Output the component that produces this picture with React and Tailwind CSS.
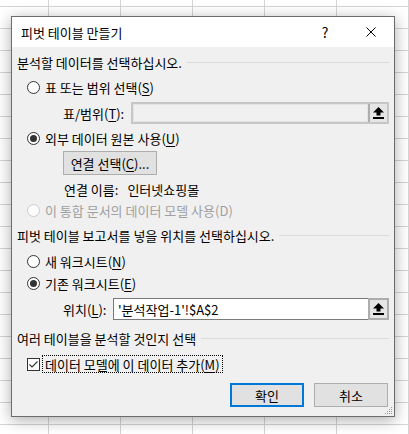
import React from "react";

const font = "font-['Noto_Sans_CJK_KR',sans-serif]";

function Radio({ checked, disabled }) {
  return (
    <span
      className={
        disabled
          ? "w-[13px] h-[13px] rounded-full border border-[#cccccc] bg-[#fcfcfc] flex items-center justify-center shrink-0"
          : "w-[13px] h-[13px] rounded-full border border-[#333333] bg-white flex items-center justify-center shrink-0"
      }
    >
      {checked && <span className="w-[7px] h-[7px] rounded-full bg-[#333333]" />}
    </span>
  );
}

function Section({ children }) {
  return (
    <div className="h-[18px] flex items-center">
      <span className="whitespace-nowrap leading-none">{children}</span>
      <span className="flex-1 h-px bg-[#dcdcdc] ml-[5px]" />
    </div>
  );
}

function UpIcon() {
  return (
    <svg width="11" height="12" viewBox="0 0 11 12">
      <polygon points="5.5,0 11,5.5 7.5,5.5 7.5,8.5 3.5,8.5 3.5,5.5 0,5.5" fill="#000" />
      <rect x="0" y="10" width="11" height="2" fill="#000" />
    </svg>
  );
}

function RefButton() {
  return (
    <span className="w-[21px] h-full border-2 border-[#adadad] bg-[#e5e5e5] flex items-center justify-center shrink-0">
      <UpIcon />
    </span>
  );
}

export default function App() {
  return (
    <div
      className={`w-[409px] h-[434px] overflow-hidden bg-white bg-[linear-gradient(to_right,#d4d4d4_1px,transparent_1px),linear-gradient(to_bottom,#d4d4d4_1px,transparent_1px)] bg-[size:72px_22px] bg-[position:48px_6px] pt-[16px] pl-[11px] ${font} text-[13px] text-black`}
    >
      <div className="relative w-[384px] h-[401px] border border-[#6b6b6b] bg-[#f0f0f0] shadow-[0_3px_14px_rgba(0,0,0,0.33)] flex flex-col">
        {/* Title bar */}
        <div className="h-[30px] bg-white flex items-center shrink-0">
          <span className="pl-[9px] flex-1 leading-none">피벗 테이블 만들기</span>
          <span className="w-[46px] h-full flex items-center justify-center text-[14px] leading-none">?</span>
          <span className="w-[46px] h-full flex items-center justify-center">
            <svg width="10" height="10" viewBox="0 0 10 10">
              <path d="M0.5 0.5 L9.5 9.5 M9.5 0.5 L0.5 9.5" stroke="#000" strokeWidth="1" />
            </svg>
          </span>
        </div>

        {/* Content */}
        <div className="flex flex-col px-[5px] pt-[6px]">
          <Section>분석할 데이터를 선택하십시오.</Section>

          <div className="mt-[7px] h-[18px] flex items-center pl-[10px] gap-[5px]">
            <Radio />
            <span className="leading-none">
              표 또는 범위 선택(<u className="underline-offset-2">S</u>)
            </span>
          </div>

          <div className="mt-[6px] h-[22px] flex items-center pl-[46px]">
            <span className="w-[68px] leading-none">
              표/범위(<u className="underline-offset-2">T</u>):
            </span>
            <div className="flex-1 h-full flex border-2 border-[#c6c6c6]">
              <span className="flex-1 bg-[#f0f0f0] border border-[#e4e4e4]" />
              <span className="w-[19px] h-full border-l-2 border-[#adadad] bg-[#e5e5e5] flex items-center justify-center">
                <UpIcon />
              </span>
            </div>
          </div>

          <div className="mt-[5px] h-[18px] flex items-center pl-[10px] gap-[5px]">
            <Radio checked />
            <span className="leading-none">
              외부 데이터 원본 사용(<u className="underline-offset-2">U</u>)
            </span>
          </div>

          <div className="mt-[4px] h-[24px] flex pl-[46px]">
            <button className="w-[94px] h-full border border-[#adadad] bg-[#e1e1e1] flex items-center justify-center leading-none">
              <span>
                연결 선택(<u className="underline-offset-2">C</u>)...
              </span>
            </button>
          </div>

          <div className="mt-[5px] h-[18px] flex items-center pl-[47px]">
            <span className="leading-none">연결 이름:</span>
            <span className="leading-none ml-[9px]">인터넷쇼핑몰</span>
          </div>

          <div className="mt-[3px] h-[18px] flex items-center pl-[10px] gap-[5px]">
            <Radio disabled />
            <span className="leading-none text-[#a0a0a0]">이 통합 문서의 데이터 모델 사용(D)</span>
          </div>

          <div className="mt-[7px]">
            <Section>피벗 테이블 보고서를 넣을 위치를 선택하십시오.</Section>
          </div>

          <div className="mt-[8px] h-[18px] flex items-center pl-[10px] gap-[5px]">
            <Radio />
            <span className="leading-none">
              새 워크시트(<u className="underline-offset-2">N</u>)
            </span>
          </div>

          <div className="mt-[4px] h-[18px] flex items-center pl-[10px] gap-[5px]">
            <Radio checked />
            <span className="leading-none">
              기존 워크시트(<u className="underline-offset-2">E</u>)
            </span>
          </div>

          <div className="mt-[6px] h-[22px] flex items-center pl-[46px]">
            <span className="w-[50px] leading-none">
              위치(<u className="underline-offset-2">L</u>):
            </span>
            <div className="flex-1 h-full flex">
              <span className="flex-1 h-full bg-white border border-r-0 border-[#7a7a7a] flex items-center pl-[4px] leading-none">
                '분석작업-1'!$A$2
              </span>
              <RefButton />
            </div>
          </div>

          <div className="mt-[9px]">
            <Section>여러 테이블을 분석할 것인지 선택</Section>
          </div>

          <div className="mt-[8px] h-[18px] flex items-center pl-[10px] gap-[2px]">
            <span className="w-[13px] h-[13px] border border-[#333333] bg-white flex items-center justify-center shrink-0">
              <svg width="11" height="11" viewBox="0 0 11 11">
                <polyline points="1.5,5.5 4,8 9.5,2.5" fill="none" stroke="#333333" strokeWidth="1.1" />
              </svg>
            </span>
            <span className="h-[18px] border border-dotted border-black px-[2px] flex items-center leading-none">
              데이터 모델에 이 데이터 추가(<u className="underline-offset-2">M</u>)
            </span>
          </div>

          <div className="mt-[10px] h-[24px] flex justify-end gap-[10px] pr-[1px]">
            <button className="w-[74px] h-full border-2 border-[#0078d7] bg-[#e1e1e1] flex items-center justify-center leading-none">
              확인
            </button>
            <button className="w-[74px] h-full border border-[#adadad] bg-[#e1e1e1] flex items-center justify-center leading-none">
              취소
            </button>
          </div>
        </div>

        {/* resize grip */}
        <svg className="absolute right-[1px] bottom-[1px]" width="10" height="10" viewBox="0 0 10 10">
          <rect x="8" y="2" width="1" height="1" fill="#9a9a9a" />
          <rect x="6" y="4" width="1" height="1" fill="#9a9a9a" />
          <rect x="8" y="4" width="1" height="1" fill="#9a9a9a" />
          <rect x="4" y="6" width="1" height="1" fill="#9a9a9a" />
          <rect x="6" y="6" width="1" height="1" fill="#9a9a9a" />
          <rect x="8" y="6" width="1" height="1" fill="#9a9a9a" />
          <rect x="2" y="8" width="1" height="1" fill="#9a9a9a" />
          <rect x="4" y="8" width="1" height="1" fill="#9a9a9a" />
          <rect x="6" y="8" width="1" height="1" fill="#9a9a9a" />
          <rect x="8" y="8" width="1" height="1" fill="#9a9a9a" />
        </svg>
      </div>
    </div>
  );
}
